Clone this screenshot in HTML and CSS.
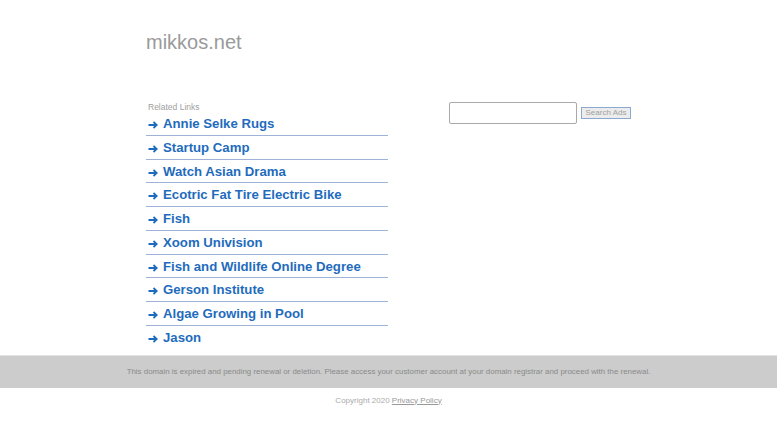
FILE: index.html
```html
<!DOCTYPE html>
<html>
<head>
<meta charset="utf-8">
<title>mikkos.net</title>
<link rel="stylesheet" href="styles.css">
</head>
<body>
<div class="page">
  <header class="header">
    <h1 class="title">mikkos.net</h1>
  </header>
  <div class="content">
    <div class="links">
      <div class="label">Related Links</div>
      <ul class="list">
        <li><a href="#"><svg class="arrow" viewBox="0 0 10 8"><path d="M0.5 4H8.5M5.5 1L8.7 4L5.5 7"/></svg>Annie Selke Rugs</a></li>
        <li><a href="#"><svg class="arrow" viewBox="0 0 10 8"><path d="M0.5 4H8.5M5.5 1L8.7 4L5.5 7"/></svg>Startup Camp</a></li>
        <li><a href="#"><svg class="arrow" viewBox="0 0 10 8"><path d="M0.5 4H8.5M5.5 1L8.7 4L5.5 7"/></svg>Watch Asian Drama</a></li>
        <li><a href="#"><svg class="arrow" viewBox="0 0 10 8"><path d="M0.5 4H8.5M5.5 1L8.7 4L5.5 7"/></svg>Ecotric Fat Tire Electric Bike</a></li>
        <li><a href="#"><svg class="arrow" viewBox="0 0 10 8"><path d="M0.5 4H8.5M5.5 1L8.7 4L5.5 7"/></svg>Fish</a></li>
        <li><a href="#"><svg class="arrow" viewBox="0 0 10 8"><path d="M0.5 4H8.5M5.5 1L8.7 4L5.5 7"/></svg>Xoom Univision</a></li>
        <li><a href="#"><svg class="arrow" viewBox="0 0 10 8"><path d="M0.5 4H8.5M5.5 1L8.7 4L5.5 7"/></svg>Fish and Wildlife Online Degree</a></li>
        <li><a href="#"><svg class="arrow" viewBox="0 0 10 8"><path d="M0.5 4H8.5M5.5 1L8.7 4L5.5 7"/></svg>Gerson Institute</a></li>
        <li><a href="#"><svg class="arrow" viewBox="0 0 10 8"><path d="M0.5 4H8.5M5.5 1L8.7 4L5.5 7"/></svg>Algae Growing in Pool</a></li>
        <li><a href="#"><svg class="arrow" viewBox="0 0 10 8"><path d="M0.5 4H8.5M5.5 1L8.7 4L5.5 7"/></svg>Jason</a></li>
      </ul>
    </div>
    <form class="search">
      <input class="search-input" type="text">
      <button class="search-btn" type="button">Search Ads</button>
    </form>
  </div>
</div>
<div class="notice">This domain is expired and pending renewal or deletion. Please access your customer account at your domain registrar and proceed with the renewal.</div>
<div class="copyright">Copyright 2020 <a href="#">Privacy Policy</a></div>
</body>
</html>
```
FILE: styles.css
```css
html, body {
  margin: 0;
  padding: 0;
  background: #fff;
  font-family: "Liberation Sans", Arial, sans-serif;
}
.page {
  width: 485px;
  margin: 0 auto;
}
.header {
  height: 101px;
  padding-top: 30px;
  box-sizing: border-box;
}
.title {
  margin: 0;
  font-size: 20px;
  font-weight: normal;
  line-height: 24px;
  color: #9a9a9a;
}
.content {
  display: flex;
  justify-content: space-between;
  align-items: flex-start;
}
.links {
  width: 242px;
}
.label {
  font-size: 8.5px;
  line-height: 10px;
  padding-top: 1px;
  color: #a0a0a0;
  padding-left: 2px;
}
.list {
  list-style: none;
  margin: 0;
  padding: 0;
}
.list li {
  height: 22.75px;
  line-height: 24px;
  border-bottom: 1px solid #9fb3d8;
}
.list li:last-child {
  border-bottom: none;
}
.list a {
  display: flex;
  align-items: center;
  height: 24px;
  padding-left: 2px;
  font-size: 13.2px;
  font-weight: bold;
  color: #1f6cbd;
  text-decoration: none;
  white-space: nowrap;
}
.arrow {
  width: 10px;
  height: 8px;
  margin-right: 5px;
  margin-top: 2px;
  fill: none;
  stroke: #1f6cbd;
  stroke-width: 1.8;
  flex: none;
}
.search {
  display: flex;
  align-items: center;
  gap: 4px;
  margin-top: 1px;
}
.search-input {
  width: 128px;
  height: 22px;
  box-sizing: border-box;
  border: 1px solid #a9a9a9;
  border-radius: 2px;
  padding: 0;
  margin: 0;
  background: #fff;
}
.search-btn {
  width: 50px;
  height: 12px;
  box-sizing: border-box;
  padding: 0;
  margin: 0;
  border: 1px solid #8aa8d0;
  background: #ececec;
  color: #a0a0a0;
  font-family: "Liberation Sans", Arial, sans-serif;
  font-size: 8px;
  line-height: 10px;
}
.notice {
  margin-top: 6px;
  height: 32px;
  line-height: 32px;
  background: #cccccc;
  border-top: 1px solid #e2e2e2;
  text-align: center;
  font-size: 7.9px;
  color: #8a8a8a;
}
.copyright {
  padding-top: 7px;
  text-align: center;
  font-size: 8px;
  line-height: 12px;
  color: #aaaaaa;
}
.copyright a {
  color: #999999;
}
```
